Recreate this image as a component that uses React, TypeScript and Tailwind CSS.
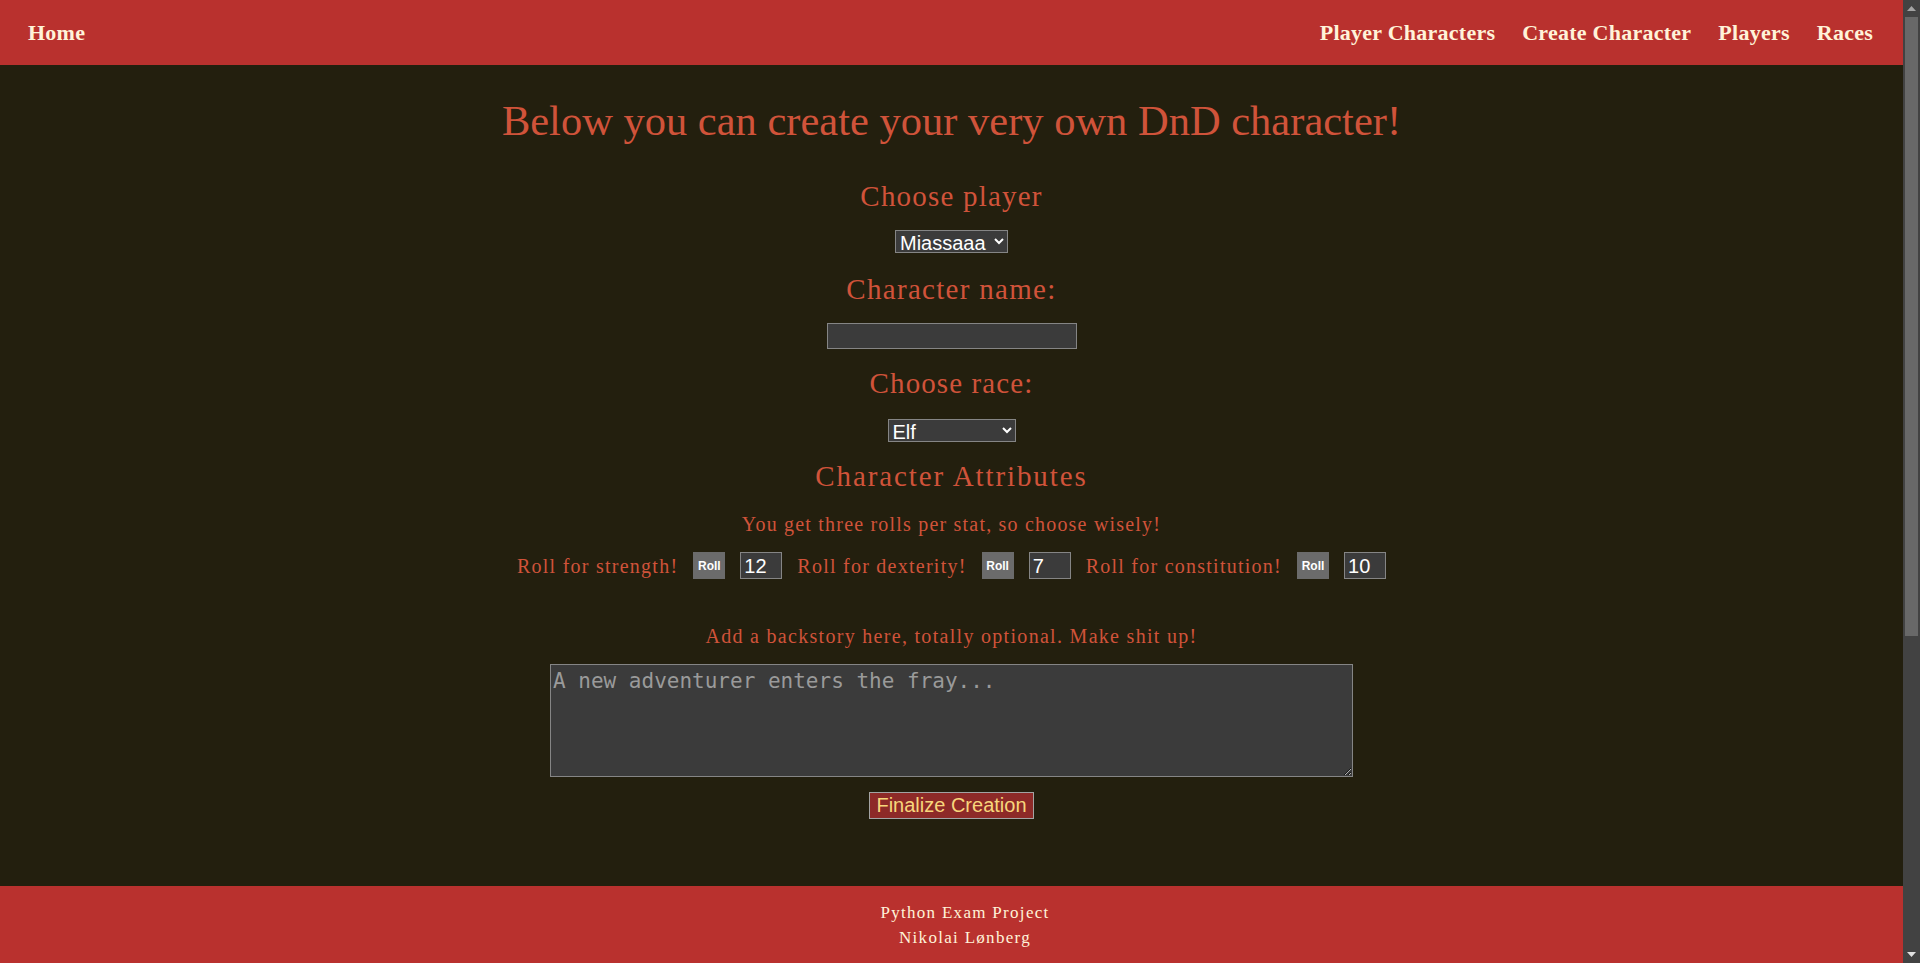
import React from "react";

function FakeScrollbar() {
  return (
    <div className="w-[17px] h-full bg-[#424242] flex flex-col items-center shrink-0">
      <div className="h-[17px] w-full flex items-center justify-center">
        <svg width="9" height="5" viewBox="0 0 9 5">
          <polygon points="4.5,0 9,5 0,5" fill="#a3a3a3" />
        </svg>
      </div>
      <div className="h-[619px] w-[13px] bg-[#686868]" />
      <div className="flex-1" />
      <div className="h-[17px] w-full flex items-center justify-center">
        <svg width="9" height="5" viewBox="0 0 9 5">
          <polygon points="0,0 9,0 4.5,5" fill="#e0e0e0" />
        </svg>
      </div>
    </div>
  );
}

export default function App() {
  const navLinks = ["Player Characters", "Create Character", "Players", "Races"];
  const rolls = [
    { label: "Roll for strength!", value: "12" },
    { label: "Roll for dexterity!", value: "7" },
    { label: "Roll for constitution!", value: "10" },
  ];
  return (
    <div className="h-screen flex [color-scheme:dark] bg-[#231f0e] font-['Liberation_Serif','DejaVu_Serif',serif]">
      <div className="flex-1 min-w-0 overflow-hidden">
        <nav className="h-[65px] bg-[#b9312e] flex items-center justify-between pl-[28px] pr-[30px] text-[#fff3d9] font-bold text-[22px] tracking-[0.25px]">
          <a href="#" className="leading-none">Home</a>
          <div className="flex gap-[27px]">
            {navLinks.map((l) => (
              <a key={l} href="#" className="leading-none">
                {l}
              </a>
            ))}
          </div>
        </nav>

        <main className="flex flex-col items-center text-[#d0533a]">
          <h1 className="mt-[31px] text-[42.5px] leading-[50px] font-normal">
            Below you can create your very own DnD character!
          </h1>

          <h2 className="mt-[33px] text-[29px] leading-[34px] tracking-[1.2px]">Choose player</h2>
          <select
            defaultValue="Miassaaa"
            className="mt-[17px] h-[23px] w-[113px] bg-[#3b3b3b] border border-[#858585] text-white text-[20px] leading-[21px] font-['Liberation_Sans',Arial,sans-serif]"
          >
            <option>Miassaaa</option>
          </select>

          <h2 className="mt-[19px] text-[29px] leading-[34px] tracking-[1.3px]">Character name:</h2>
          <input
            type="text"
            className="mt-[17px] h-[26px] w-[250px] bg-[#3b3b3b] border border-[#858585] text-white text-[16px] px-1 font-['Liberation_Sans',Arial,sans-serif]"
          />

          <h2 className="mt-[17px] text-[29px] leading-[34px] tracking-[1.1px]">Choose race:</h2>
          <select
            defaultValue="Elf"
            className="mt-[19px] h-[23px] w-[128px] bg-[#3b3b3b] border border-[#858585] text-white text-[20px] leading-[21px] font-['Liberation_Sans',Arial,sans-serif]"
          >
            <option>Elf</option>
          </select>

          <h2 className="mt-[17px] text-[29px] leading-[34px] tracking-[1.9px]">Character Attributes</h2>

          <p className="mt-[19px] text-[20px] leading-[24px] tracking-[1.2px]">
            You get three rolls per stat, so choose wisely!
          </p>

          <div className="mt-[16px] flex items-center gap-[15px] text-[20px] tracking-[1.25px]">
            {rolls.map((r) => (
              <div key={r.label} className="flex items-center gap-[15px]">
                <span className="leading-[24px]">{r.label}</span>
                <button className="h-[27px] w-[32px] bg-[#6b6b6b] text-white text-[12px] font-semibold font-['Liberation_Sans',Arial,sans-serif] tracking-normal">
                  Roll
                </button>
                <input
                  type="text"
                  defaultValue={r.value}
                  className="h-[27px] w-[42px] bg-[#3b3b3b] border border-[#858585] text-white text-[20px] px-[3px] tracking-normal font-['Liberation_Sans',Arial,sans-serif]"
                />
              </div>
            ))}
          </div>

          <p className="mt-[45px] text-[20px] leading-[24px] tracking-[1.3px]">
            Add a backstory here, totally optional. Make shit up!
          </p>

          <textarea
            placeholder="A new adventurer enters the fray..."
            className="mt-[16px] h-[113px] w-[803px] bg-[#3b3b3b] border border-[#858585] text-white text-[21px] leading-[25px] px-[2px] pt-[4px] placeholder:text-[#9a9a9a] font-['DejaVu_Sans_Mono','Liberation_Mono',monospace]"
          />

          <button className="mt-[15px] h-[27px] w-[165px] bg-[#8d2a28] border border-[#a3a3a3] text-[#f7d67c] text-[20px] leading-[25px] font-['Liberation_Sans',Arial,sans-serif]">
            Finalize Creation
          </button>
        </main>

        <footer className="mt-[67px] min-h-[561px] bg-[#b9312e] pt-[14px] pl-[27px] text-center text-[#fff3d9] text-[17px] leading-[25px] tracking-[1.3px]">
          <p>Python Exam Project</p>
          <p>Nikolai Lønberg</p>
        </footer>
      </div>
      <FakeScrollbar />
    </div>
  );
}
